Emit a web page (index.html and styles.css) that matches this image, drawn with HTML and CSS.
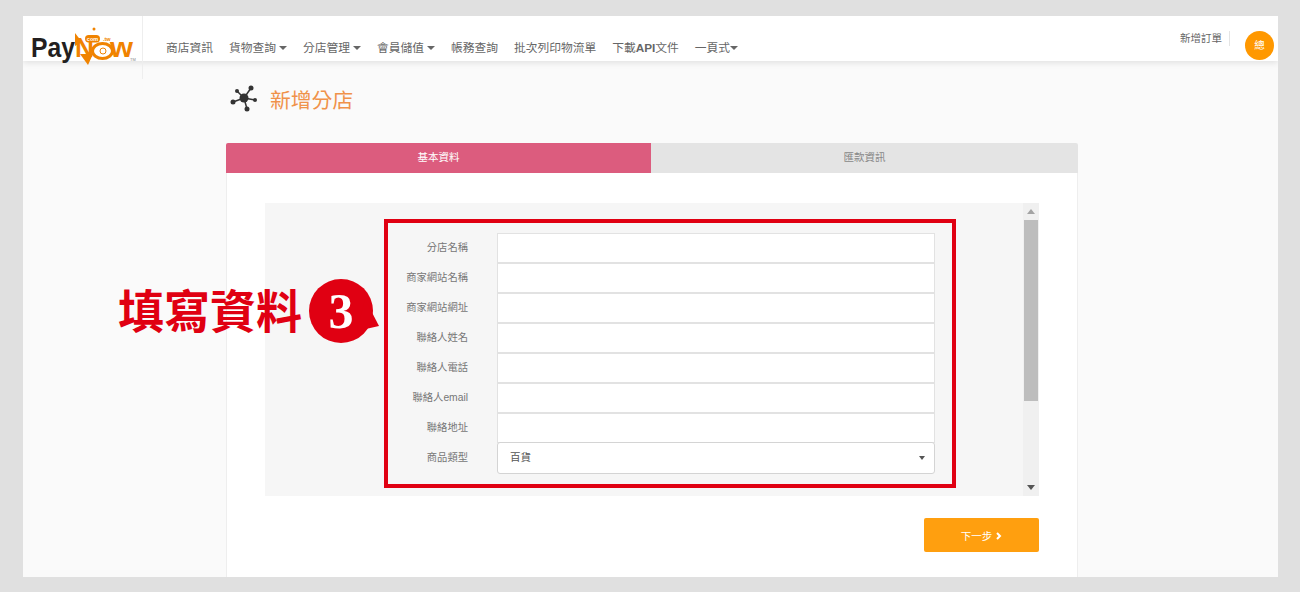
FILE: index.html
```html
<!DOCTYPE html>
<html lang="zh-Hant">
<head>
    <meta charset="UTF-8">
    <meta name="viewport" content="width=device-width, initial-scale=1.0">
    <title>新增分店</title>
    <link rel="stylesheet" href="styles.css">
</head>
<body>
    <div class="page">
        <header class="topbar">
            <a class="logo" href="#">
                <svg width="119" height="63" viewBox="0 0 119 63">
                    <text class="logo-pay" x="8" y="41" textLength="44" lengthAdjust="spacingAndGlyphs">Pay</text>
                    <text class="logo-orange" x="52" y="41" textLength="19" lengthAdjust="spacingAndGlyphs">N</text>
                    <polygon class="logo-fill" points="52,17 59,26 52,30"/>
                    <polygon class="logo-fill" points="57,38 70,38 65,49"/>
                    <ellipse class="logo-ring" cx="79.5" cy="35" rx="10" ry="7.5"/>
                    <circle class="logo-fill" cx="71" cy="13" r="1.5"/>
                    <rect class="logo-fill" x="62" y="19" width="15" height="7.5" rx="3.7"/>
                    <text class="logo-com" x="69.5" y="25" text-anchor="middle">com</text>
                    <text class="logo-tw" x="80" y="25">.tw</text>
                    <circle class="logo-ring-thin" cx="80" cy="35" r="3"/>
                    <text class="logo-orange" x="87" y="41" textLength="23" lengthAdjust="spacingAndGlyphs">w</text>
                    <text class="logo-tm" x="107" y="45">TM</text>
                </svg>
            </a>
            <nav class="menu">
                <a href="#">商店資訊</a>
                <a href="#">貨物查詢<i class="caret spaced"></i></a>
                <a href="#">分店管理<i class="caret spaced"></i></a>
                <a href="#">會員儲值<i class="caret spaced"></i></a>
                <a href="#">帳務查詢</a>
                <a href="#">批次列印物流單</a>
                <a href="#">下載<b>API</b>文件</a>
                <a href="#">一頁式<i class="caret"></i></a>
            </nav>
            <div class="topbar-right">
                <a class="new-order" href="#">新增訂單</a>
                <span class="avatar">總</span>
            </div>
        </header>

        <main class="content">
            <div class="page-title">
                <svg width="30" height="30" viewBox="0 0 30 30">
                    <g class="node-lines">
                        <line x1="15" y1="14" x2="22" y2="4"/>
                        <line x1="15" y1="14" x2="8" y2="7"/>
                        <line x1="15" y1="14" x2="4" y2="18"/>
                        <line x1="15" y1="14" x2="26" y2="16"/>
                        <line x1="15" y1="14" x2="18" y2="25"/>
                    </g>
                    <circle class="node" cx="15" cy="14" r="4.5"/>
                    <circle class="node" cx="22" cy="4" r="2.5"/>
                    <circle class="node" cx="8" cy="7" r="2"/>
                    <circle class="node" cx="4" cy="18" r="2.5"/>
                    <circle class="node" cx="26" cy="16" r="2"/>
                    <circle class="node" cx="18" cy="25" r="2.5"/>
                </svg>
                <h1>新增分店</h1>
            </div>

            <div class="tabs">
                <div class="tab active">基本資料</div>
                <div class="tab">匯款資訊</div>
            </div>

            <div class="card">
                <div class="panel">
                    <form class="form">
                        <div class="row"><label>分店名稱</label><input type="text"></div>
                        <div class="row"><label>商家網站名稱</label><input type="text"></div>
                        <div class="row"><label>商家網站網址</label><input type="text"></div>
                        <div class="row"><label>聯絡人姓名</label><input type="text"></div>
                        <div class="row"><label>聯絡人電話</label><input type="text"></div>
                        <div class="row"><label>聯絡人email</label><input type="text"></div>
                        <div class="row"><label>聯絡地址</label><input type="text"></div>
                        <div class="row row-select">
                            <label>商品類型</label>
                            <div class="select"><span>百貨</span><i class="caret"></i></div>
                        </div>
                    </form>
                    <div class="scrollbar">
                        <i class="arrow-up"></i>
                        <div class="thumb"></div>
                        <i class="arrow-down"></i>
                    </div>
                </div>
                <div class="actions">
                    <button type="button" class="next">下一步
                        <svg width="6" height="8" viewBox="0 0 6 8"><polyline points="1,1 4,4 1,7"/></svg>
                    </button>
                </div>
            </div>
        </main>

        <!-- 教學標註 -->
        <div class="highlight"></div>
        <div class="callout">
            <span class="callout-text">填寫資料</span>
            <svg width="72" height="66" viewBox="0 0 72 66">
                <circle cx="32" cy="32" r="32"/>
                <polygon points="56,20 70,47 48,52"/>
                <text x="32" y="49" text-anchor="middle">3</text>
            </svg>
        </div>
    </div>
</body>
</html>
```

FILE: styles.css
```css
* {
    box-sizing: border-box;
}

body {
    margin: 0;
    height: 592px;
    padding: 16px 22px 15px 23px;
    overflow: hidden;
    background-color: #e0e0e0;
    font-family: "Liberation Sans", "Noto Sans CJK TC", sans-serif;
    color: #666;
}

a {
    color: inherit;
    text-decoration: none;
}

.page {
    position: relative;
    height: 561px;
    overflow: hidden;
    background-color: #fafafa;
}

/* header */
.topbar {
    display: flex;
    height: 45px;
    background-color: white;
    box-shadow: 0 2px 6px rgba(0, 0, 0, 0.1);
}

.logo {
    flex: none;
    width: 120px;
    height: 63px;
    border-right: 1px solid #eee;
}

.logo svg {
    display: block;
}

.logo-pay {
    font-size: 28px;
    font-weight: bold;
    fill: #231f20;
}

.logo-orange {
    font-size: 27px;
    font-weight: bold;
    fill: #f08300;
}

.logo-fill {
    fill: #f08300;
}

.logo-ring {
    fill: white;
    stroke: #f08300;
    stroke-width: 3;
}

.logo-ring-thin {
    fill: none;
    stroke: #f08300;
    stroke-width: 1;
}

.logo-com {
    font-size: 5.5px;
    font-weight: bold;
    fill: white;
}

.logo-tw {
    font-size: 5.5px;
    font-weight: bold;
    fill: #f08300;
}

.logo-tm {
    font-size: 4px;
    fill: #888;
}

.menu {
    display: flex;
    gap: 16px;
    padding: 24px 0 0 23px;
    font-size: 11.75px;
    line-height: 16px;
}

.menu b {
    font-weight: bold;
}

.caret {
    display: inline-block;
    width: 0;
    height: 0;
    vertical-align: 2px;
    border-top: 4px solid #666;
    border-left: 4px solid transparent;
    border-right: 4px solid transparent;
}

.caret.spaced {
    margin-left: 3px;
}

.topbar-right {
    display: flex;
    align-items: flex-start;
    margin-left: auto;
    padding: 15px 4px 0 0;
}

.new-order {
    padding-right: 7px;
    border-right: 1px solid #e4e4e4;
    font-size: 10.5px;
    line-height: 15px;
}

.avatar {
    width: 29px;
    height: 29px;
    margin: 0 0 0 15px;
    border-radius: 50%;
    background-color: #ff9800;
    color: white;
    font-size: 10.5px;
    line-height: 29px;
    text-align: center;
}

/* content */
.content {
    width: 852px;
    margin-left: 203px;
}

.page-title {
    display: flex;
    align-items: center;
    gap: 11px;
    height: 30px;
    margin: 23px 0 29px;
    padding-left: 3px;
}

.page-title h1 {
    margin: 0;
    font-size: 20.8px;
    font-weight: normal;
    color: #f0924a;
}

.node {
    fill: #333;
}

.node-lines {
    stroke: #333;
    stroke-width: 1.5;
}

.tabs {
    display: flex;
    height: 30px;
    border-radius: 2px 2px 0 0;
    overflow: hidden;
}

.tab {
    flex: 1;
    background-color: #e4e4e4;
    color: #888;
    font-size: 10.5px;
    line-height: 29px;
    text-align: center;
}

.tab.active {
    flex: none;
    width: 425px;
    background-color: #dc5c7e;
    color: white;
}

.card {
    height: 420px;
    padding: 30px 38px 0;
    background-color: white;
    border: 1px solid #eee;
    border-top: 0;
}

.panel {
    display: flex;
    width: 774px;
    height: 293px;
    background-color: #f6f6f6;
}

.form {
    flex: 1;
    padding: 30px 88px 0 0;
}

.row {
    display: flex;
    align-items: center;
    gap: 29px;
    height: 30px;
}

.row label {
    flex: none;
    width: 203px;
    padding-bottom: 3px;
    font-size: 10.3px;
    text-align: right;
    color: #777;
}

.row input {
    flex: 1;
    height: 30px;
    border: 1px solid #e2e2e2;
    background-color: white;
}

.row-select {
    height: 32px;
    margin-top: -1px;
}

.select {
    display: flex;
    flex: 1;
    align-items: center;
    justify-content: space-between;
    height: 32px;
    padding: 0 12px;
    border: 1px solid #d4d4d4;
    border-radius: 3px;
    background-color: white;
    font-size: 10.5px;
    color: #555;
}

.select span {
    padding-bottom: 3px;
}

.select .caret {
    margin-right: -3px;
    border-top-color: #555;
    border-left-width: 3.5px;
    border-right-width: 3.5px;
}

.scrollbar {
    display: flex;
    flex: none;
    flex-direction: column;
    align-items: center;
    width: 16px;
    background-color: #f0f0f0;
}

.arrow-up,
.arrow-down {
    width: 0;
    height: 0;
    margin: 6px 0 6px;
    border-left: 4px solid transparent;
    border-right: 4px solid transparent;
}

.arrow-up {
    border-bottom: 5px solid #a3a3a3;
}

.arrow-down {
    margin-top: auto;
    margin-bottom: 6px;
    border-top: 5px solid #555;
}

.thumb {
    width: 14px;
    height: 181px;
    background-color: #bdbdbd;
}

.actions {
    display: flex;
    justify-content: flex-end;
    margin-top: 22px;
}

.next {
    width: 115px;
    height: 34px;
    border: none;
    border-radius: 2px;
    background-color: #ff9f0f;
    color: white;
    font-family: inherit;
    font-size: 10.5px;
    cursor: pointer;
}

.next svg {
    margin-left: 1px;
    fill: none;
    stroke: white;
    stroke-width: 2;
}

/* annotations over the page */
.highlight {
    position: absolute;
    left: 361px;
    top: 203px;
    width: 572px;
    height: 269px;
    border: 4px solid #e00012;
}

.callout {
    position: absolute;
    left: 95px;
    top: 263px;
    display: flex;
    align-items: flex-start;
    gap: 7px;
}

.callout-text {
    padding-top: 6px;
    font-size: 46px;
    font-weight: bold;
    line-height: 54px;
    color: #e00012;
}

.callout svg {
    fill: #e00012;
}

.callout text {
    font-family: "Liberation Serif", serif;
    font-size: 50px;
    font-weight: bold;
    fill: white;
}
```
